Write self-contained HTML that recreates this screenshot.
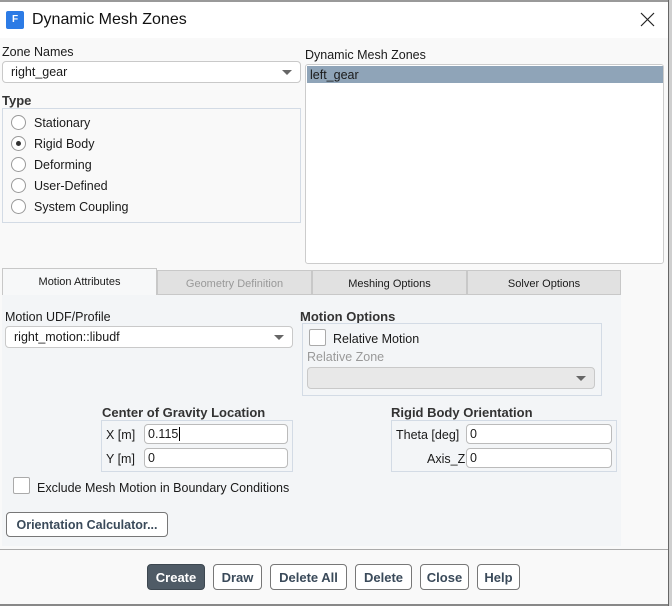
<!DOCTYPE html>
<html><head><meta charset="utf-8"><style>
*{box-sizing:border-box;margin:0;padding:0}
body{width:672px;height:606px;overflow:hidden;background:#f9f9f9;font-family:"Liberation Sans",sans-serif;font-size:12.5px;color:#1a1a1a;position:relative}
.a{position:absolute;white-space:nowrap}
.combo{position:absolute;background:#fff;border:1px solid #c9c9c9;border-radius:4px;padding-left:8px;line-height:21px}
.arr{position:absolute;right:8px;top:8px;width:0;height:0;border-left:5px solid transparent;border-right:5px solid transparent;border-top:5px solid #666}
.box{position:absolute;border:1px solid #d3dbe5}
.rad{position:absolute;width:15px;height:15px;border:1px solid #999;border-radius:50%;background:#fff}
.chk{position:absolute;width:17px;height:17px;border:1px solid #aaa;background:#fff;border-radius:2px}
.in{position:absolute;background:#fff;border:1px solid #bbb;border-radius:4px;padding-left:3px;line-height:19px}
.b{font-weight:bold;color:#333}
.tab{position:absolute;top:270px;height:25px;background:#e1e1e1;border:1px solid #c8c8c8;text-align:center;line-height:26px;font-size:11px}
.btn{position:absolute;top:564px;height:26px;border:1px solid #777;border-radius:4px;background:#fff;text-align:center;line-height:25px;font-weight:bold;color:#3a4a5a;font-size:13px}
</style></head><body>
<div class="a" style="left:0;top:0;width:672px;height:38px;background:#fff"></div>
<div class="a" style="left:0;top:0;width:668px;height:2px;background:#999"></div>
<div class="a" style="left:6px;top:11px;width:18px;height:18px;background:#2c7be5;border-radius:2px;color:#fff;font-size:10px;font-weight:bold;text-align:center;line-height:18px">F</div>
<div class="a" style="left:32px;top:11px;font-size:16px;color:#111">Dynamic Mesh Zones</div>
<svg class="a" style="left:640px;top:12px" width="15" height="15"><path d="M1 1L14 14M14 1L1 14" stroke="#222" stroke-width="1.2"/></svg>
<div class="a" style="left:668px;top:0;width:4px;height:606px;background:#cfcfcf;border-left:1px solid #666"></div>

<div class="a" style="left:2px;top:45px">Zone Names</div>
<div class="combo" style="left:2px;top:61px;width:299px;height:22px">right_gear<div class="arr"></div></div>
<div class="a b" style="left:2px;top:93px;font-size:13px">Type</div>
<div class="box" style="left:2px;top:108px;width:299px;height:115px"></div>
<div class="rad" style="left:11px;top:115px"></div><div class="a" style="left:34px;top:116px">Stationary</div>
<div class="rad" style="left:11px;top:136px"></div><div class="a" style="left:16px;top:141px;width:5px;height:5px;border-radius:50%;background:#333"></div><div class="a" style="left:34px;top:137px">Rigid Body</div>
<div class="rad" style="left:11px;top:157px"></div><div class="a" style="left:34px;top:158px">Deforming</div>
<div class="rad" style="left:11px;top:178px"></div><div class="a" style="left:34px;top:179px">User-Defined</div>
<div class="rad" style="left:11px;top:199px"></div><div class="a" style="left:34px;top:200px">System Coupling</div>

<div class="a" style="left:305px;top:48px">Dynamic Mesh Zones</div>
<div class="a" style="left:305px;top:64px;width:359px;height:200px;background:#fff;border:1px solid #ccc;border-radius:3px"></div>
<div class="a" style="left:307px;top:66px;width:356px;height:17px;background:#8fa4b8;padding-left:3px;line-height:18px">left_gear</div>

<div class="a" style="left:2px;top:294px;width:619px;height:252px;background:#f3f5f7"></div>
<div class="tab" style="left:2px;top:268px;width:155px;height:27px;background:#f7f8f9;border-bottom:none">Motion Attributes</div>
<div class="tab" style="left:157px;width:155px;color:#999">Geometry Definition</div>
<div class="tab" style="left:312px;width:155px">Meshing Options</div>
<div class="tab" style="left:467px;width:154px">Solver Options</div>

<div class="a" style="left:5px;top:310px">Motion UDF/Profile</div>
<div class="combo" style="left:5px;top:326px;width:288px;height:22px">right_motion::libudf<div class="arr"></div></div>
<div class="a b" style="left:300px;top:309px;font-size:13px">Motion Options</div>
<div class="box" style="left:302px;top:323px;width:300px;height:73px"></div>
<div class="chk" style="left:309px;top:329px"></div>
<div class="a" style="left:333px;top:332px">Relative Motion</div>
<div class="a" style="left:307px;top:350px;color:#999">Relative Zone</div>
<div class="combo" style="left:307px;top:367px;width:288px;height:22px;background:#e8e8e8"><div class="arr"></div></div>

<div class="a b" style="left:102px;top:405px;font-size:13px">Center of Gravity Location</div>
<div class="box" style="left:101px;top:420px;width:192px;height:52px"></div>
<div class="a" style="left:106px;top:428px">X [m]</div>
<div class="in" style="left:144px;top:424px;width:144px;height:20px">0.115<span style="border-left:1px solid #000;margin-left:1px"></span></div>
<div class="a" style="left:106px;top:452px">Y [m]</div>
<div class="in" style="left:144px;top:448px;width:144px;height:20px">0</div>

<div class="a b" style="left:391px;top:405px;font-size:13px">Rigid Body Orientation</div>
<div class="box" style="left:391px;top:420px;width:226px;height:52px"></div>
<div class="a" style="left:396px;top:428px">Theta [deg]</div>
<div class="in" style="left:466px;top:424px;width:146px;height:20px">0</div>
<div class="a" style="left:427px;top:452px">Axis_Z</div>
<div class="in" style="left:466px;top:448px;width:146px;height:20px">0</div>

<div class="chk" style="left:13px;top:477px"></div>
<div class="a" style="left:37px;top:481px">Exclude Mesh Motion in Boundary Conditions</div>
<div class="a b" style="left:6px;top:512px;width:162px;height:25px;border:1px solid #777;border-radius:4px;background:#fff;text-align:center;line-height:24px;color:#3a4a5a">Orientation Calculator...</div>

<div class="a" style="left:0;top:549px;width:668px;height:1px;background:#aaa"></div>
<div class="btn" style="left:147px;width:58px;background:#4f5b66;color:#fff;border-color:#3d4750">Create</div>
<div class="btn" style="left:213px;width:49px">Draw</div>
<div class="btn" style="left:270px;width:77px">Delete All</div>
<div class="btn" style="left:355px;width:57px">Delete</div>
<div class="btn" style="left:420px;width:49px">Close</div>
<div class="btn" style="left:477px;width:43px">Help</div>
<div class="a" style="left:0;top:604px;width:668px;height:2px;background:#888"></div>
</body></html>
